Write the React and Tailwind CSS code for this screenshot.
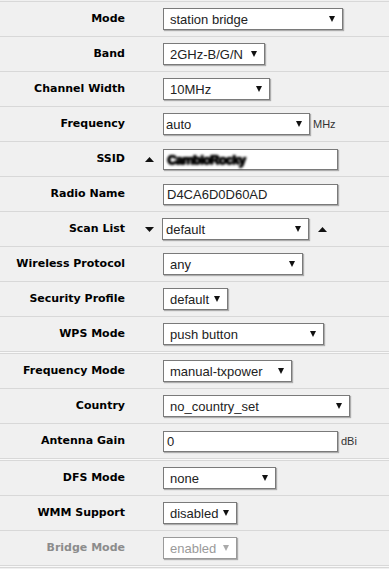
import React from "react";

const Tri = ({ up = false, gray = false, w = 7, h = 6 }) => (
  <svg width={w} height={h} viewBox={`0 0 ${w} ${h}`} className="block shrink-0">
    {up ? (
      <polygon points={`${w / 2},0 ${w},${h} 0,${h}`} fill={gray ? "#aaa" : "#111"} />
    ) : (
      <polygon points={`0,0 ${w},0 ${w / 2},${h}`} fill={gray ? "#aaa" : "#111"} />
    )}
  </svg>
);

const Select = ({ w, value, pad = "pl-[6px]", disabled = false, ml = "" }) => (
  <div
    className={`${w} ${ml} h-[22px] flex items-center bg-white border ${
      disabled ? "border-[#9a9a9a] text-[#9a9a9a]" : "border-[#7a7a7a] text-[#222]"
    } shadow-[1px_1px_1px_rgba(0,0,0,0.28)]`}
  >
    <span className={`flex-1 ${pad} leading-none whitespace-nowrap`}>{value}</span>
    <span className="mr-[7px]">
      <Tri gray={disabled} w={6} h={6} />
    </span>
  </div>
);

const Input = ({ w, children }) => (
  <div
    className={`${w} h-[21px] flex items-center bg-white border border-[#7a7a7a] text-[#222] shadow-[1px_1px_1px_rgba(0,0,0,0.28)] pl-[3px] leading-none whitespace-nowrap`}
  >
    {children}
  </div>
);

const Row = ({ label, gray = false, leftArrow = null, children }) => (
  <div className="h-[34px] box-content flex items-center">
    <div
      className={`w-[125px] text-right font-bold text-[11px] ${
        gray ? "text-[#8c8c8c]" : "text-black"
      } font-['DejaVu_Sans',sans-serif] whitespace-nowrap`}
    >
      {label}
    </div>
    <div className="w-[38px] flex items-center pl-[20px]">{leftArrow}</div>
    <div className="flex items-center">{children}</div>
  </div>
);

const Unit = ({ children }) => (
  <span className="ml-[3px] text-[11px] text-[#333] font-['Liberation_Sans',Arial,sans-serif]">
    {children}
  </span>
);

export default function App() {
  return (
    <div className="w-[389px] h-[569px] bg-[#f0f0f0] overflow-hidden font-['Liberation_Sans',Arial,sans-serif] text-[13px]">
      <div className="h-px" />
      <div className="border-y border-[#d8d8d8] divide-y divide-[#d8d8d8]">
        <Row label="Mode">
          <Select w="w-[180px]" value="station bridge" />
        </Row>
        <Row label="Band">
          <Select w="w-[102px]" value="2GHz-B/G/N" pad="pl-[6px]" />
        </Row>
        <Row label="Channel Width">
          <Select w="w-[107px]" value="10MHz" />
        </Row>
        <Row label="Frequency">
          <Select w="w-[147px]" value="auto" pad="pl-[2px]" />
          <Unit>MHz</Unit>
        </Row>
        <Row label="SSID" leftArrow={<Tri up w={9} h={5} />}>
          <Input w="w-[175px]">
            <span className="font-black text-black blur-[0.9px] tracking-[-0.8px] text-[13px] [text-shadow:0_0_1px_#000,1px_0_1px_#000,0_1px_1px_#000]">
              CambioRocky
            </span>
          </Input>
        </Row>
        <Row label="Radio Name">
          <Input w="w-[175px]">D4CA6D0D60AD</Input>
        </Row>
        <Row label="Scan List" leftArrow={<Tri w={9} h={5} />}>
          <Select w="w-[147px]" value="default" pad="pl-[3px]" ml="-ml-px" />
          <span className="ml-[9px]">
            <Tri up w={9} h={5} />
          </span>
        </Row>
        <Row label="Wireless Protocol">
          <Select w="w-[140px]" value="any" />
        </Row>
        <Row label="Security Profile">
          <Select w="w-[65px]" value="default" />
        </Row>
        <Row label="WPS Mode">
          <Select w="w-[161px]" value="push button" />
        </Row>
      </div>
      <div className="h-px bg-[#f9f9f9]" />
      <div className="border-y border-[#d8d8d8] divide-y divide-[#d8d8d8]">
        <Row label="Frequency Mode">
          <Select w="w-[129px]" value="manual-txpower" />
        </Row>
        <Row label="Country">
          <Select w="w-[187px]" value="no_country_set" />
        </Row>
        <Row label="Antenna Gain">
          <Input w="w-[175px]">0</Input>
          <Unit>dBi</Unit>
        </Row>
      </div>
      <div className="h-px bg-[#f9f9f9]" />
      <div className="border-y border-[#d8d8d8] divide-y divide-[#d8d8d8]">
        <Row label="DFS Mode">
          <Select w="w-[113px]" value="none" />
        </Row>
        <Row label="WMM Support">
          <Select w="w-[74px]" value="disabled" />
        </Row>
        <Row label="Bridge Mode" gray>
          <Select w="w-[74px]" value="enabled" disabled />
        </Row>
      </div>
      <div className="h-px bg-[#f9f9f9]" />
      <div className="h-px bg-[#d8d8d8]" />
    </div>
  );
}
